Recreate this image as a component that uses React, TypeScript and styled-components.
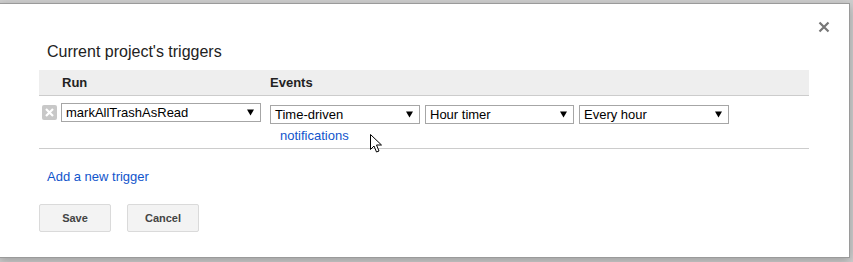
import styled, { createGlobalStyle } from "styled-components";

const GlobalStyle = createGlobalStyle`
  html, body {
    margin: 0;
    padding: 0;
    background: #cfcfcf;
    font-family: "Liberation Sans", Arial, sans-serif;
    overflow: hidden;
  }
`;

const Page = styled.div`
  width: 853px;
  height: 262px;
  padding-top: 3px;
  box-sizing: border-box;
`;

const Dialog = styled.div`
  position: relative;
  width: 851px;
  height: 255px;
  margin-left: -1px;
  box-sizing: border-box;
  background: #fff;
  border: 1px solid #9a9a9a;
  box-shadow: 0 3px 10px rgba(0, 0, 0, 0.25);
  padding: 38px 40px 0 39px;
`;

const CloseButton = styled.button`
  position: absolute;
  top: 17px;
  right: 19px;
  width: 12px;
  height: 12px;
  padding: 0;
  border: 0;
  background: none;
  cursor: pointer;
  display: flex;
`;

const Title = styled.div`
  font-size: 16px;
  line-height: 20px;
  color: #222;
  padding-left: 8px;
  margin-bottom: 8px;
`;

const HeaderBand = styled.div`
  display: grid;
  grid-template-columns: 231px 1fr;
  height: 25px;
  align-items: center;
  background: #eeeeee;
  border-bottom: 1px solid #cccccc;
  font-size: 13px;
  font-weight: bold;
  color: #222;
`;

const HeaderCell = styled.div<{ $indent?: number }>`
  padding-left: ${(p) => p.$indent ?? 0}px;
`;

const TriggerRow = styled.div`
  display: grid;
  grid-template-columns: 231px 1fr;
  padding: 7px 0 5px;
  border-bottom: 1px solid #cccccc;
`;

const RunCell = styled.div`
  display: flex;
  align-items: center;
  gap: 4px;
  padding-left: 3px;
  align-self: start;
`;

const DeleteIcon = styled.div`
  width: 15px;
  height: 15px;
  border-radius: 2px;
  background: #c8c8c8;
  display: flex;
  align-items: center;
  justify-content: center;
`;

const EventsCell = styled.div`
  display: flex;
  flex-direction: column;
  padding-top: 2px;
`;

const SelectGroup = styled.div`
  display: flex;
  gap: 5px;
`;

const Select = styled.div<{ $width: number }>`
  width: ${(p) => p.$width}px;
  height: 19px;
  box-sizing: border-box;
  border: 1px solid #a6a6a6;
  background: #fff;
  display: flex;
  align-items: center;
  justify-content: space-between;
  padding: 0 6px 0 4px;
  font-size: 13px;
  color: #000;
`;

const Link = styled.a`
  font-size: 13px;
  line-height: 15px;
  color: #1155cc;
  text-decoration: none;
  cursor: pointer;
`;

const NotifyLink = styled(Link)`
  margin: 4px 0 0 10px;
  align-self: flex-start;
`;

const AddRow = styled.div`
  padding: 19px 0 0 8px;
  line-height: 16px;
`;

const Buttons = styled.div`
  display: flex;
  gap: 16px;
  margin-top: 20px;
`;

const Button = styled.button`
  width: 72px;
  height: 28px;
  box-sizing: border-box;
  border: 1px solid #dadada;
  border-radius: 2px;
  background: #f3f3f3;
  font-family: "Liberation Sans", Arial, sans-serif;
  font-size: 11px;
  font-weight: bold;
  color: #444;
  cursor: pointer;
`;

const Cursor = styled.svg`
  position: absolute;
  left: 370px;
  top: 130px;
  pointer-events: none;
`;

const Arrow = () => (
  <svg width="7" height="7" viewBox="0 0 7 7">
    <polygon points="0,0.5 7,0.5 3.5,6.5" fill="#000" />
  </svg>
);

const Dropdown = ({ value, width }: { value: string; width: number }) => (
  <Select $width={width}>
    <span>{value}</span>
    <Arrow />
  </Select>
);

const App = () => {
  return (
    <>
      <GlobalStyle />
      <Page>
        <Dialog>
          <CloseButton aria-label="Close">
            <svg width="12" height="12" viewBox="0 0 12 12">
              <path d="M1.5 1.5 L10.5 10.5 M10.5 1.5 L1.5 10.5" stroke="#777" strokeWidth="2.2" />
            </svg>
          </CloseButton>
          <Title>Current project's triggers</Title>
          <HeaderBand>
            <HeaderCell $indent={23}>Run</HeaderCell>
            <HeaderCell>Events</HeaderCell>
          </HeaderBand>
          <TriggerRow>
            <RunCell>
              <DeleteIcon>
                <svg width="9" height="9" viewBox="0 0 9 9">
                  <path d="M1 1 L8 8 M8 1 L1 8" stroke="#fff" strokeWidth="2.2" />
                </svg>
              </DeleteIcon>
              <Dropdown value="markAllTrashAsRead" width={200} />
            </RunCell>
            <EventsCell>
              <SelectGroup>
                <Dropdown value="Time-driven" width={150} />
                <Dropdown value="Hour timer" width={149} />
                <Dropdown value="Every hour" width={150} />
              </SelectGroup>
              <NotifyLink>notifications</NotifyLink>
            </EventsCell>
          </TriggerRow>
          <AddRow>
            <Link>Add a new trigger</Link>
          </AddRow>
          <Buttons>
            <Button>Save</Button>
            <Button>Cancel</Button>
          </Buttons>
          <Cursor width="14" height="20" viewBox="0 0 14 20">
            <path
              d="M0.5 0.5 L0.5 15.5 L4 12 L6.5 18 L9 17 L6.5 11 L11.5 11 Z"
              fill="#fff"
              stroke="#000"
              strokeWidth="1"
              strokeLinejoin="round"
            />
          </Cursor>
        </Dialog>
      </Page>
    </>
  );
};

export default App;
